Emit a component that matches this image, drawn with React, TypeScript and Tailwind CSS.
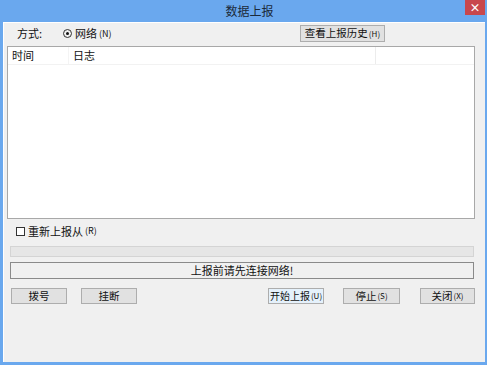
import React from "react";

const FONT = { fontFamily: '"Noto Sans CJK SC", "Noto Sans", sans-serif' };

function Key({ k, small }: { k: string; small?: boolean }) {
  return (
    <span className={small ? "ml-[1px] text-[8px]" : "ml-[2px] text-[9px]"}>
      ({k})
    </span>
  );
}

function Btn({
  label,
  k,
  className = "",
}: {
  label: string;
  k?: string;
  className?: string;
}) {
  return (
    <button
      className={`flex h-[16px] shrink-0 items-center justify-center whitespace-nowrap border border-[#adadad] bg-[#e1e1e1] text-[10.5px] leading-none text-[#111] ${className}`}
    >
      {label}
      {k && <Key k={k} small />}
    </button>
  );
}

export default function App() {
  return (
    <div
      style={FONT}
      className="flex h-[365px] w-[487px] flex-col bg-[#6aa8ee] text-[11px] text-[#111]"
    >
      {/* Title bar */}
      <div className="relative flex h-[22px] shrink-0 items-center justify-center">
        <span className="pl-[12px] text-[12px] text-[#1b2a3a]">数据上报</span>
        <div className="absolute right-[2px] top-0 flex h-[15px] w-[20px] items-center justify-center bg-[#c8474c] text-[11px] font-bold text-white">
          ×
        </div>
      </div>

      {/* Client area */}
      <div className="mb-[3px] ml-[3px] mr-[2px] flex flex-1 flex-col border-l border-t border-white bg-[#f0f0f0]">
        {/* Method row */}
        <div className="mt-[2px] flex h-[17px] items-center whitespace-nowrap">
          <span className="ml-[13px] w-[46px] shrink-0">方式:</span>
          <div className="flex w-[237px] shrink-0 items-center">
            <span className="flex h-[9px] w-[9px] items-center justify-center rounded-full border border-[#333]">
              <span className="h-[3px] w-[3px] rounded-full bg-[#111]" />
            </span>
            <span className="ml-[3px]">网络</span>
            <Key k="N" />
          </div>
          <Btn label="查看上报历史" k="H" className="h-[17px] w-[85px]" />
        </div>

        {/* Log list */}
        <div className="ml-[3px] mt-[4px] flex h-[173px] w-[468px] flex-col border border-[#a8a8a8] bg-white">
          <div className="flex h-[18px] items-center border-b border-[#f2f2f2]">
            <div className="flex h-full w-[61px] items-center border-r border-[#f4f4f4] pl-[4px]">
              时间
            </div>
            <div className="flex h-full w-[307px] items-center border-r border-[#ececec] pl-[4px]">
              日志
            </div>
          </div>
        </div>

        {/* Re-report checkbox */}
        <div className="ml-[12px] mt-[5px] flex h-[14px] items-center whitespace-nowrap">
          <span className="h-[9px] w-[9px] border border-[#333] bg-white" />
          <span className="ml-[3px]">重新上报从</span>
          <Key k="R" />
        </div>

        {/* Progress */}
        <div className="ml-[6px] mt-[8px] h-[11px] w-[464px] border border-[#d4d4d4] bg-[#e6e6e6]" />

        {/* Status */}
        <div className="ml-[6px] mt-[5px] flex h-[17px] w-[464px] items-center justify-center border border-[#8a8a8a] bg-[#f0f0f0]">
          上报前请先连接网络!
        </div>

        {/* Buttons */}
        <div className="mt-[9px] flex items-center">
          <Btn label="拨号" className="ml-[7px] w-[56px]" />
          <Btn label="挂断" className="ml-[14px] w-[56px]" />
          <Btn
            label="开始上报"
            k="U"
            className="ml-[131px] w-[56px] border-[#3c8fdd] bg-[#e5f1fb] text-[10px]"
          />
          <Btn label="停止" k="S" className="ml-[19px] w-[57px]" />
          <Btn label="关闭" k="X" className="ml-[20px] w-[55px]" />
        </div>
      </div>
    </div>
  );
}
